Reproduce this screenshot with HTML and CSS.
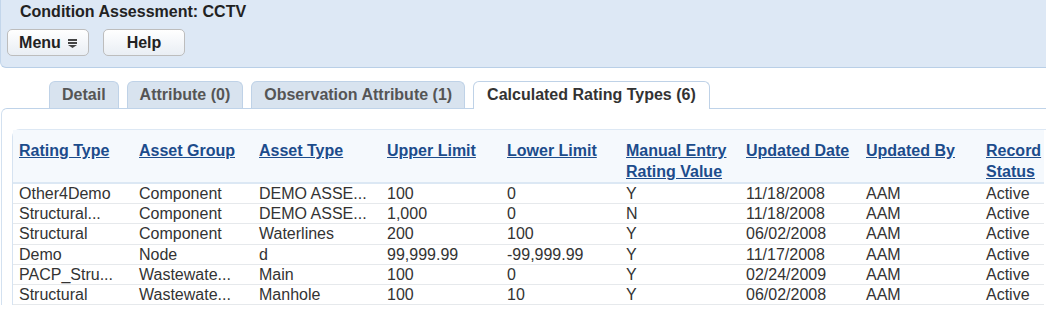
FILE: index.html
```html
<!DOCTYPE html>
<html lang="en">
<head>
    <meta charset="UTF-8">
    <title>Condition Assessment: CCTV</title>
    <link rel="stylesheet" href="styles.css">
</head>
<body>

    <div class="header">
        <h1 class="title">Condition Assessment: CCTV</h1>
        <div class="toolbar">
            <button class="btn">Menu
                <svg class="menu-icon" width="9" height="9" viewBox="0 0 9 9">
                    <rect x="0" y="0" width="9" height="2" fill="#444"/>
                    <rect x="0" y="3" width="9" height="2" fill="#444"/>
                    <polygon points="0,6 9,6 4.5,9" fill="#444"/>
                </svg>
            </button>
            <button class="btn">Help</button>
        </div>
    </div>

    <div class="tabs">
        <div class="tab">Detail</div>
        <div class="tab">Attribute (0)</div>
        <div class="tab">Observation Attribute (1)</div>
        <div class="tab active">Calculated Rating Types (6)</div>
    </div>

    <div class="panel">
        <div class="grid">
            <table>
                <colgroup>
                    <col style="width:120px">
                    <col style="width:120px">
                    <col style="width:128px">
                    <col style="width:120px">
                    <col style="width:119px">
                    <col style="width:120px">
                    <col style="width:120px">
                    <col style="width:120px">
                    <col style="width:64px">
                </colgroup>
                <thead>
                    <tr>
                        <th><a href="#">Rating Type</a></th>
                        <th><a href="#">Asset Group</a></th>
                        <th><a href="#">Asset Type</a></th>
                        <th><a href="#">Upper Limit</a></th>
                        <th><a href="#">Lower Limit</a></th>
                        <th><a href="#">Manual Entry Rating Value</a></th>
                        <th><a href="#">Updated Date</a></th>
                        <th><a href="#">Updated By</a></th>
                        <th><a href="#">Record Status</a></th>
                    </tr>
                </thead>
                <tbody>
                    <tr><td>Other4Demo</td><td>Component</td><td>DEMO ASSE...</td><td>100</td><td>0</td><td>Y</td><td>11/18/2008</td><td>AAM</td><td>Active</td></tr>
                    <tr><td>Structural...</td><td>Component</td><td>DEMO ASSE...</td><td>1,000</td><td>0</td><td>N</td><td>11/18/2008</td><td>AAM</td><td>Active</td></tr>
                    <tr><td>Structural</td><td>Component</td><td>Waterlines</td><td>200</td><td>100</td><td>Y</td><td>06/02/2008</td><td>AAM</td><td>Active</td></tr>
                    <tr><td>Demo</td><td>Node</td><td>d</td><td>99,999.99</td><td>-99,999.99</td><td>Y</td><td>11/17/2008</td><td>AAM</td><td>Active</td></tr>
                    <tr><td>PACP_Stru...</td><td>Wastewate...</td><td>Main</td><td>100</td><td>0</td><td>Y</td><td>02/24/2009</td><td>AAM</td><td>Active</td></tr>
                    <tr><td>Structural</td><td>Wastewate...</td><td>Manhole</td><td>100</td><td>10</td><td>Y</td><td>06/02/2008</td><td>AAM</td><td>Active</td></tr>
                </tbody>
            </table>
        </div>
    </div>

</body>
</html>
```

FILE: styles.css
```css
html, body { margin: 0; overflow: hidden; }
body { font-family: "Liberation Sans", Arial, sans-serif; font-size: 16px; color: #333; background: #fff; }

.header { height: 68px; padding: 2px 0 0 6px; background: #dde8f5; border-left: 1px solid #c3d6eb; border-bottom: 1px solid #b9cfe7; border-bottom-left-radius: 6px; box-sizing: border-box; }
.title { margin: 0 0 0 13px; font-size: 16px; line-height: 20px; color: #222; }
.toolbar { display: flex; gap: 14px; margin-top: 7px; }
.btn { width: 82px; height: 27px; font-family: inherit; font-size: 16px; font-weight: bold; color: #222; border: 1px solid #bdbdbd; border-radius: 5px; background: linear-gradient(#ffffff, #e9eef4); display: flex; align-items: center; justify-content: center; gap: 7px; padding: 0; }
.menu-icon { margin-top: 1px; }

.tabs { display: flex; gap: 8px; margin: 13px 0 0 49px; position: relative; z-index: 1; }
.tab { height: 26px; line-height: 26px; padding: 0 12px; font-weight: bold; color: #555; background: #d8e3ef; border: 1px solid #bfd2e7; border-bottom: none; border-radius: 6px 6px 0 0; }
.tab.active { background: #fff; color: #333; height: 27px; margin-bottom: -1px; padding: 0 13px; }

.panel { border-top: 1px solid #bfd3e9; border-left: 1px solid #d3e1f0; border-top-left-radius: 6px; padding: 20px 0 0 10px; margin-left: 1px; }
.grid { width: 1100px; border-top: 1px solid #dde8f4; border-left: 1px solid #d6e3f1; border-top-left-radius: 8px; }

table { border-collapse: collapse; table-layout: fixed; width: 1031px; }
thead tr { background: #f5f9fd; }
th { text-align: left; vertical-align: top; padding: 10px 0 0 6px; height: 42px; line-height: 21px; border-bottom: 2px solid #dce8f4; }
th a { color: #1c4c8c; font-weight: bold; }
td { padding: 0 0 0 6px; height: 19.2px; line-height: 19.2px; border-bottom: 1px solid #e6e9ec; white-space: nowrap; }
```
